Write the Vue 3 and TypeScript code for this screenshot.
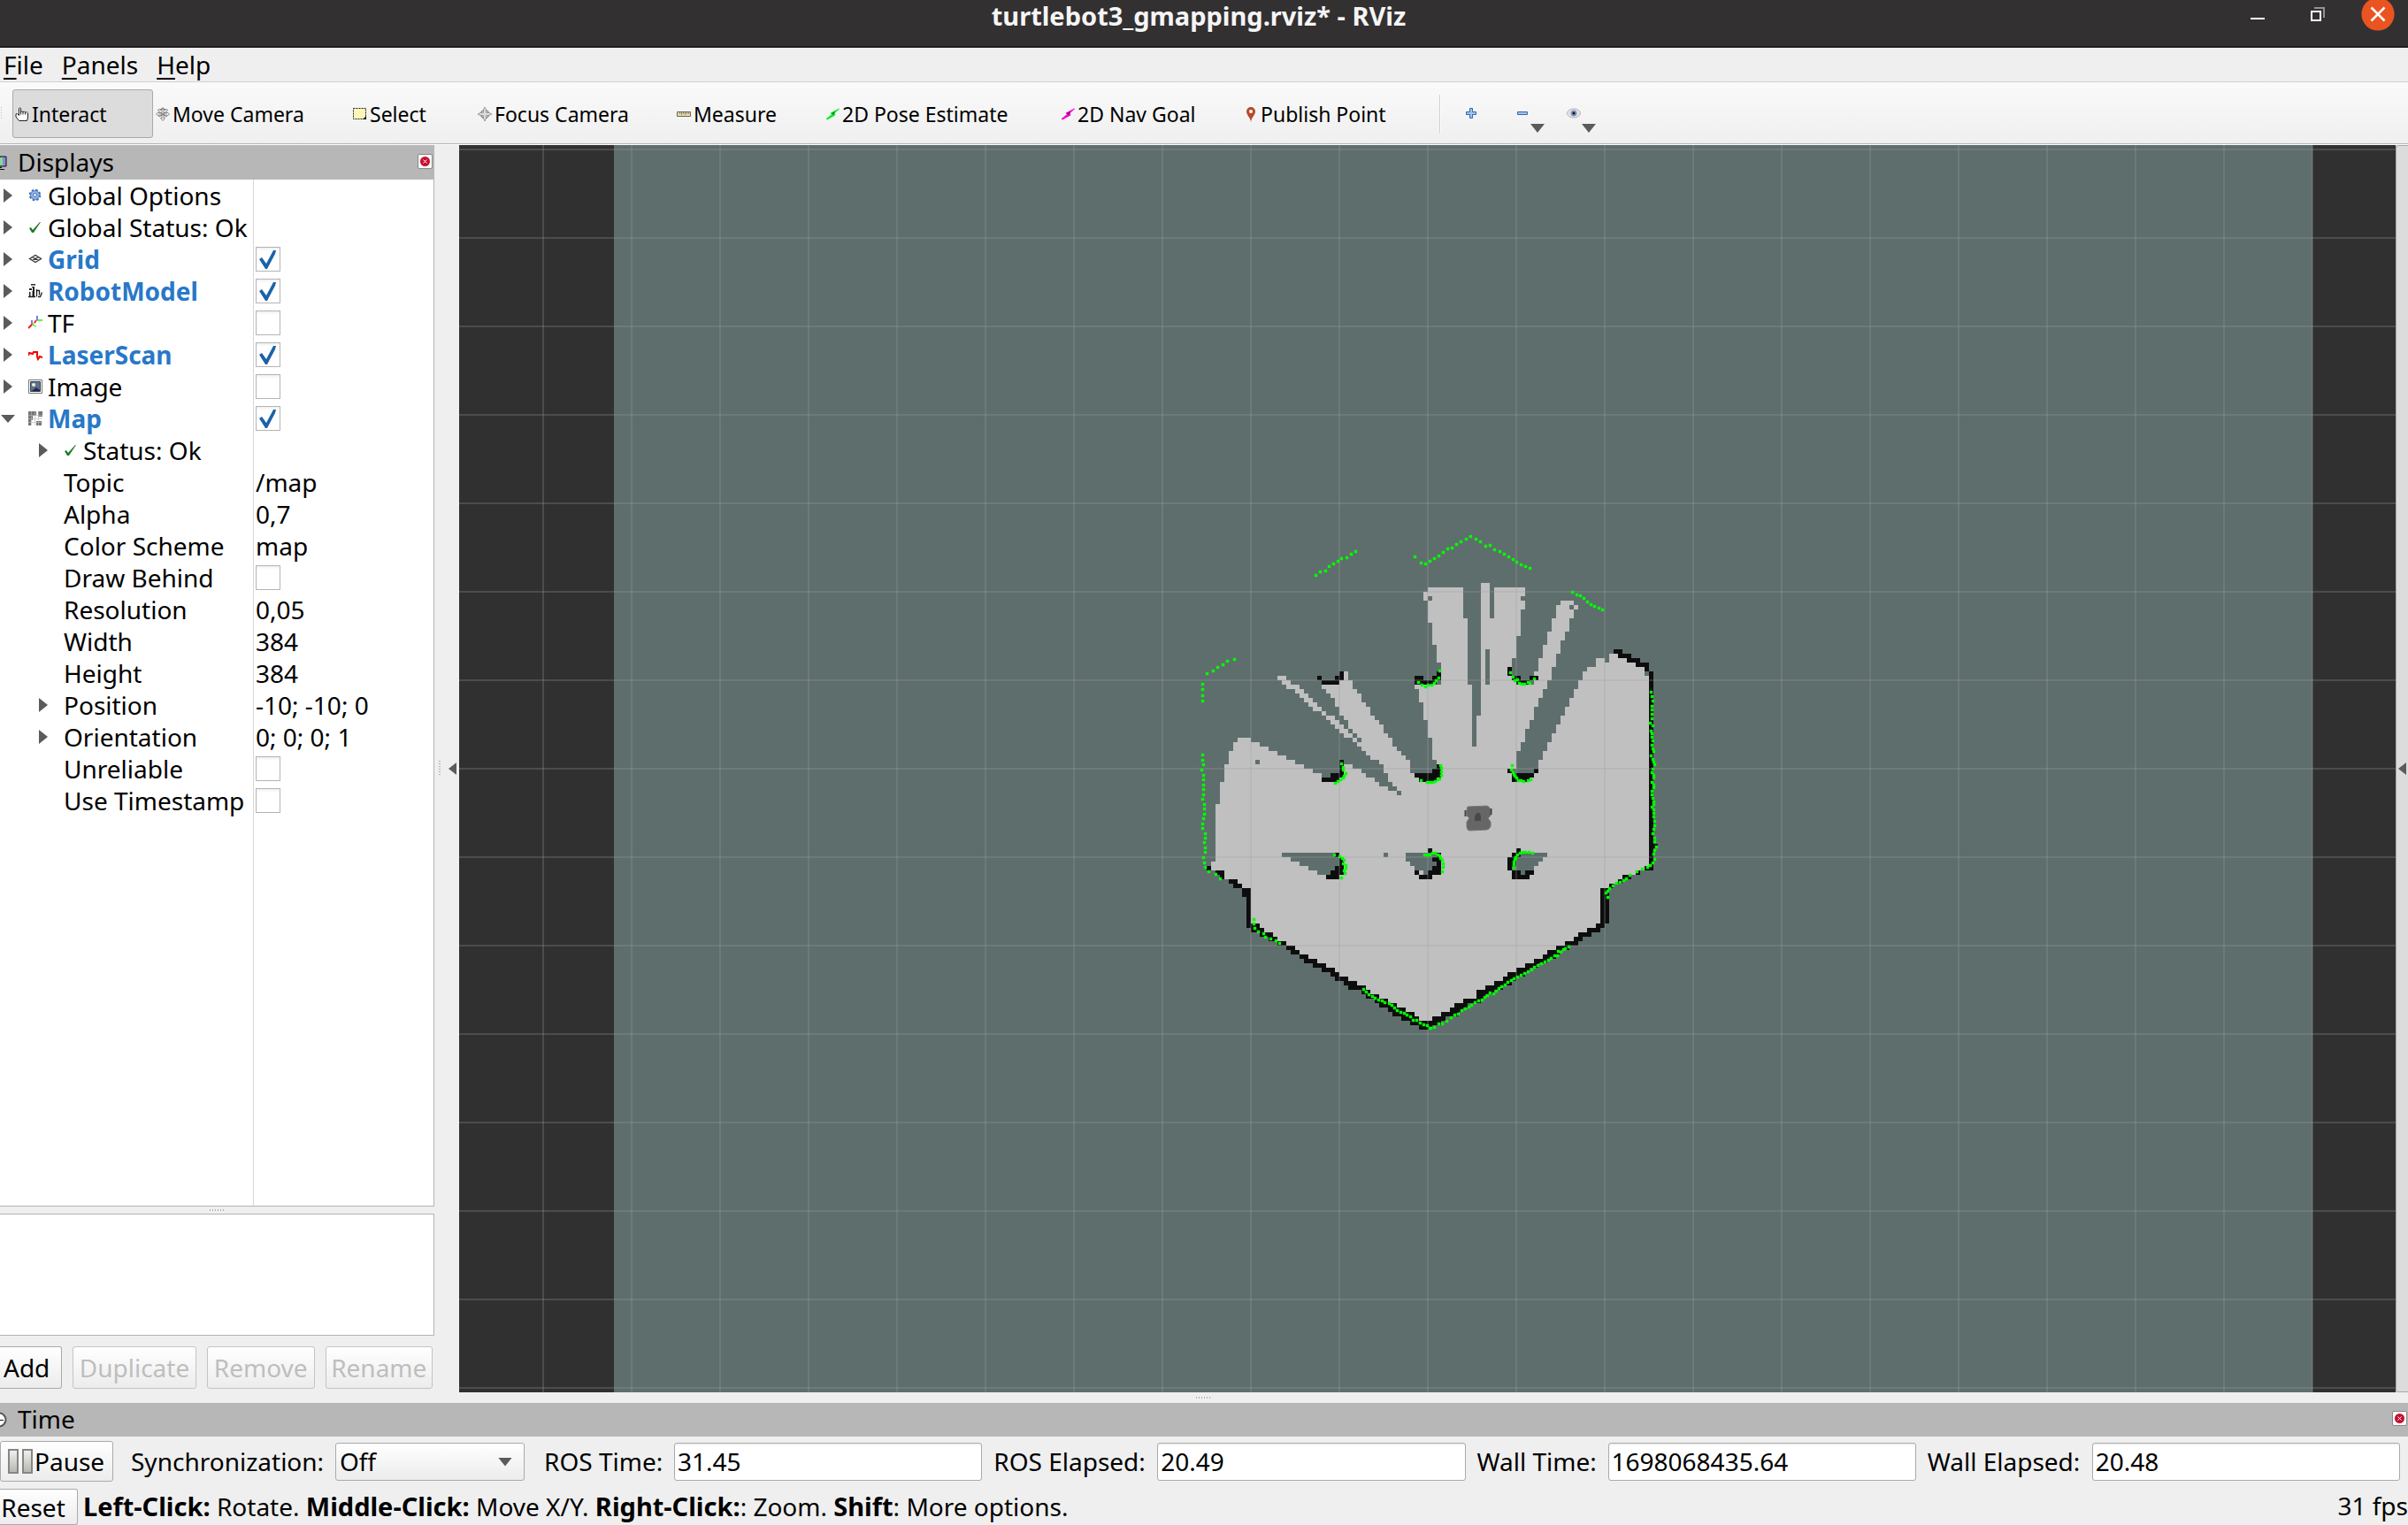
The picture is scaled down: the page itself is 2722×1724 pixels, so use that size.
<script setup lang="ts">
import { computed, ref } from 'vue'

interface Tool { id: string; label: string; width: number }
interface Property {
  id: string
  name: string
  icon?: string
  level: 0 | 1
  arrow?: 'right' | 'down'
  strong?: boolean
  value?: string
  checked?: boolean
}

const menus = ['File', 'Panels', 'Help']

const tools: Tool[] = [
  { id: 'interact', label: 'Interact', width: 159 },
  { id: 'move', label: 'Move Camera', width: 223 },
  { id: 'select', label: 'Select', width: 141 },
  { id: 'focus', label: 'Focus Camera', width: 225 },
  { id: 'measure', label: 'Measure', width: 168 },
  { id: 'pose', label: '2D Pose Estimate', width: 266 },
  { id: 'goal', label: '2D Nav Goal', width: 207 },
  { id: 'publish', label: 'Publish Point', width: 222 },
]
const activeTool = ref('interact')

const properties = ref<Property[]>([
  { id: 'global-options', name: 'Global Options', icon: 'gear', level: 0, arrow: 'right' },
  { id: 'global-status', name: 'Global Status: Ok', icon: 'ok', level: 0, arrow: 'right' },
  { id: 'grid', name: 'Grid', icon: 'grid', level: 0, arrow: 'right', strong: true, checked: true },
  { id: 'robot', name: 'RobotModel', icon: 'robot', level: 0, arrow: 'right', strong: true, checked: true },
  { id: 'tf', name: 'TF', icon: 'tf', level: 0, arrow: 'right', checked: false },
  { id: 'laser', name: 'LaserScan', icon: 'laser', level: 0, arrow: 'right', strong: true, checked: true },
  { id: 'image', name: 'Image', icon: 'image', level: 0, arrow: 'right', checked: false },
  { id: 'map', name: 'Map', icon: 'map', level: 0, arrow: 'down', strong: true, checked: true },
  { id: 'map-status', name: 'Status: Ok', icon: 'ok', level: 1, arrow: 'right' },
  { id: 'topic', name: 'Topic', level: 1, value: '/map' },
  { id: 'alpha', name: 'Alpha', level: 1, value: '0,7' },
  { id: 'scheme', name: 'Color Scheme', level: 1, value: 'map' },
  { id: 'behind', name: 'Draw Behind', level: 1, checked: false },
  { id: 'resolution', name: 'Resolution', level: 1, value: '0,05' },
  { id: 'width', name: 'Width', level: 1, value: '384' },
  { id: 'height', name: 'Height', level: 1, value: '384' },
  { id: 'position', name: 'Position', level: 1, arrow: 'right', value: '-10; -10; 0' },
  { id: 'orientation', name: 'Orientation', level: 1, arrow: 'right', value: '0; 0; 0; 1' },
  { id: 'unreliable', name: 'Unreliable', level: 1, checked: false },
  { id: 'timestamp', name: 'Use Timestamp', level: 1, checked: false },
])

const clocks = [
  { id: 'ros-time', label: 'ROS Time:', value: '31.45', labelWidth: 133 },
  { id: 'ros-elapsed', label: 'ROS Elapsed:', value: '20.49', labelWidth: 171 },
  { id: 'wall-time', label: 'Wall Time:', value: '1698068435.64', labelWidth: 134 },
  { id: 'wall-elapsed', label: 'Wall Elapsed:', value: '20.48', labelWidth: 172 },
]

const hints = [
  ['Left-Click:', ' Rotate. '],
  ['Middle-Click:', ' Move X/Y. '],
  ['Right-Click:', ': Zoom. '],
  ['Shift', ': More options.'],
]

// Occupancy grid, one entry per row or row range: "row:from-to,from-to".
const freeRuns = `15:66-68 16:54-62,66-68,69-76 17:53-62,66-68,69-76 18:53-54,55-62,66-68,69-75
19:54-62,66-68,69-76,84-87 20:54-62,66-68,69-76,83-86,87-88 21-22:54-62,66-68,69-75,83-87
23:54-63,66-75,82-86 24-25:55-63,66-75,82-86 26:55-63,66-75,81-85 27:55-63,66-74,81-85
28:55-63,66-74,81-84 29:56-63,66-74,80-84 30:56-63,66-67,68-74,80-84 31:56-63,66-67,68-74,80-83,95-98
32:56-63,66-67,68-73,79-83,92-94,95-99 33:57-63,66-67,68-73,79-83,92-101 34:57-63,66-67,68-73,79-82,90-103
35:57-63,66-67,68-73,78-82,35-36,89-103 36:20-22,35-36,57-63,66-67,68-74,79-82,89-104
37:21-23,34-37,57-63,66-67,68-74,78-81,88-104 38:22-25,30-37,51-64,66-81,88-104
39:24-26,31-38,52-64,66-80,87-104 40:25-27,32-39,52-64,66-80,87-104 41:26-28,33-39,52-64,66-79,86-104
42:27-29,33-40,53-64,66-79,86-104 43:28-30,34-41,53-64,66-78,85-104 44:30-31,34-41,53-64,66-78,85-104
45:31-33,35-42,53-64,65-78,84-104 46:32-34,36-43,54-64,65-77,84-104 47:33-35,36-44,54-64,65-77,83-104
48:34-36,37-44,54-64,65-76,83-104 49:35-37,38-45,54-64,65-76,82-104 50:11-14,37-38,39-46,55-64,65-76,82-104
51:10-14,38-46,55-64,65-75,81-104 51:14-16 52:10-18,39-47,55-75,81-104 53:9-20,40-48,55-74,80-104
54:9-22,41-49,55-74,80-104 55:9-24,43-50,56-74,79-104 56:8-26,35-37,44-50,57-74,79-104
57:8-28,35-39,44-50,57-72,79-104 58:8-30,35-40,45-51,57-104 59:8-42,45-104 60:7-43,46-104 61:7-45,47-104
62:7-47,48-104 63-64:7-104 65-77:6-104 78:5-104 79:5-103 80:7-101 81:8-99 82:9-97 83:11-96 84-91:14-94
92:14-93 93:16-91 94:18-89 95:20-88 96:21-86 97:23-84 98:25-82 99:26-81 100:28-79 101:30-77 102:32-75
103:34-73 104:35-72 105:37-70 106:39-68 107:41-66 108:42-65 109:44-63 110:46-61 111:48-60 112:50-58 113:52-56`

const unknownRuns = `55:15-16 58:30-32,74-78 57:73-79 76:21-33,44-45,49-56,75-81 77:23-34,49-55,74-80 78:25-34,50-56,74-79
79:27-33,51-55,73-78 80:29-32,53-54,75-76`

const wallRuns = `35:34-35,56-57,104-105 36:29-30,33-35,51-53,55-57,73-75,77-79 37:30-34,51-56,74-77 34:72-73,103-104
33:101-104 32:99-102 31:97-100 30:96-98 35:72-73 36-79:104-105 55-57:34-35 58:32-35 59:30-34
56:56-57 57:55-57,72-73,78-79 58:51-57,73-78 59:52-56,73-77 74:105-106
75:54-55,74-75 76:33-34,56-57,73-75 77:34-35,55-57,72-74 78:34-35,56-57,72-74 79:33-35,55-57,72-73
80:32-35,51-52,54-57,73-75,76-78 81:31-34,52-55,73-77
79:4-5,103-105 80:6-8,101-102 81:7-8,98-100 82:9-11,97-98 83:10-12,95-96 84-85:12-14,93-95 86-91:13-14,93-95
92:13-16,92-94 93:14-17,90-93 94:16-19,88-91 95:18-20,87-89 96:20-22,85-88 97:22-24,83-86 98:23-25,81-84
99:25-27,80-83 100:26-29,78-81 101:28-31,76-79 102:30-33,74-77 103:32-34,72-76 104:33-36,71-74
105:35-38,69-73 106:36-40,67-71 107:39-41,65-69 108:40-43,65-67 109:42-45,62-66 110:43-47,60-63
111:45-49,59-62 112:46-51,57-61 113:48-52,55-58 114:50-57 115:52-55`

function runsToPath(runs: string): string {
  return runs.split(/\s+/).map((entry) => {
    const [rows, spans] = entry.split(':')
    const [top, bottom = top] = rows.split('-').map(Number)
    return spans.split(',').map((span) => {
      const [from, to] = span.split('-').map(Number)
      return `M${from} ${top}H${to}V${bottom + 1}H${from}Z`
    }).join('')
  }).join('')
}

const freePath = computed(() => runsToPath(freeRuns))
const unknownPath = computed(() => runsToPath(unknownRuns))
const wallPath = computed(() => runsToPath(wallRuns))

// Laser returns in view pixels.
const scan = `1487,650 1492,646 1498,645 1502,640 1507,637 1512,634 1516,631 1522,630 1527,626 1532,623
1364,761 1371,758 1376,754 1382,751 1387,747 1395,745 1359,773 1359,779 1359,786 1359,792
1359,853 1359,859 1360,864 1358,870 1360,876 1360,881 1360,887 1360,892 1360,898 1359,903 1361,909 1361,914 1361,920
1360,925 1359,931 1359,936 1362,942 1362,947 1361,952 1362,958 1362,963 1360,969 1361,975 1362,980 1366,985 1374,988 1379,993
1417,1039 1417,1044 1418,1049 1422,1053 1428,1055 1430,1059 1436,1061 1442,1063 1446,1066
1541,1118 1544,1121 1547,1124 1551,1126 1554,1128 1558,1130 1562,1131 1565,1133 1570,1134 1573,1136 1576,1139 1579,1142
1583,1144 1587,1145 1590,1147 1594,1149 1597,1153 1601,1153 1605,1156 1609,1158 1613,1159 1616,1162
1516,863 1518,867 1518,870 1521,874 1519,877 1518,879 1515,881 1512,883 1509,885
1508,966 1514,968 1517,970 1519,972 1518,976 1521,978 1521,981 1519,984 1520,987 1516,992
1599,629 1606,636 1611,637 1616,634 1621,631 1626,628 1631,624 1636,620 1641,619 1646,615 1651,612 1657,609 1662,606
1668,609 1673,612 1679,617 1684,616 1689,621 1695,623 1700,626 1705,629 1710,632 1714,635 1719,638 1724,640 1729,642
1777,669 1782,672 1786,673 1790,676 1794,680 1798,683 1802,685 1807,687 1811,689
1603,771 1607,774 1611,776 1614,774 1618,774 1621,772 1623,769 1626,766 1627,758
1707,760 1710,765 1712,769 1715,768 1717,772 1720,773 1723,773 1727,771 1729,772 1734,767
1628,865 1629,868 1629,872 1629,876 1627,880 1625,881 1622,883 1619,884 1616,884 1613,884 1606,882
1709,865 1708,870 1710,873 1711,875 1712,877 1714,879 1716,882 1719,882 1722,883 1727,882 1730,881
1866,782 1867,787 1868,792 1867,798 1867,802 1867,807 1867,812 1865,817 1868,820 1866,826 1867,829 1867,833 1868,837
1867,842 1868,846 1869,849 1866,854 1868,858 1869,861 1870,864 1868,869 1867,873 1869,876 1869,879 1867,884 1869,887
1869,890 1867,894 1867,898 1868,902 1869,906 1869,909 1867,912 1869,915 1869,919 1869,923 1870,928 1870,933 1869,937
1868,942 1870,947 1870,951 1872,957 1870,961 1869,965 1870,971 1868,975 1865,978 1862,980 1856,982 1850,985 1842,989
1838,993 1835,995 1831,997 1827,998 1823,1001 1819,1004 1817,1007 1815,1009 1817,1014
1773,1070 1769,1072 1767,1073 1764,1076 1761,1075 1760,1080 1757,1080 1753,1083 1750,1085 1746,1087 1742,1089 1738,1091
1734,1093 1731,1096 1727,1098 1723,1100 1719,1102 1715,1104 1711,1106 1708,1108 1704,1110 1701,1113 1697,1115 1694,1117
1691,1120 1688,1123 1684,1122 1681,1125 1678,1127 1675,1130 1671,1131 1667,1133 1663,1136 1660,1138 1656,1140 1652,1142
1648,1146 1644,1147 1640,1150 1635,1154 1630,1157 1626,1157 1621,1161 1617,1162
1610,966 1613,966 1616,966 1619,964 1622,964 1625,966 1627,967 1628,970 1630,972 1631,976 1631,980 1630,985
1711,981 1711,977 1711,974 1712,971 1713,969 1715,966 1718,964 1721,963 1724,963 1728,963 1732,964`

const scanPath = scan.split(/\s+/).map((point) => {
  const [x, y] = point.split(',').map(Number)
  return `M${x - 1} ${y - 1}h3v3h-3z`
}).join('')

const gridColumns = Array.from({ length: 21 }, (_, i) => `M${614 + i * 100} 164V1574`).join('')
const gridRows = Array.from({ length: 15 }, (_, i) => `M519 ${169 + i * 100}H2708`).join('')
</script>

<template>
  <div class="window">
    <header class="titlebar">
      <h1>turtlebot3_gmapping.rviz* - RViz</h1>
      <div class="window-buttons">
        <button type="button" aria-label="Minimize">
          <svg width="16" height="16"><path d="M0 12h16v2H0z" fill="#fff" /></svg>
        </button>
        <button type="button" aria-label="Restore">
          <svg width="16" height="16"><path d="M4 0h12v12h-2V2H4z" fill="#949393" /><path d="M1 5h10v10H1z" fill="none" stroke="#fff" stroke-width="2" /></svg>
        </button>
        <button type="button" aria-label="Close">
          <svg width="38" height="38"><circle cx="19" cy="19" r="18.6" fill="#e95420" /><path d="M11.500 11.500l15 15m0-15l-15 15" stroke="#fff" stroke-width="2.500" /></svg>
        </button>
      </div>
    </header>

    <nav class="menubar">
      <button v-for="menu in menus" :key="menu" type="button"><span class="mnemonic">{{ menu[0] }}</span>{{ menu.slice(1) }}</button>
    </nav>

    <div class="toolbar">
      <span class="handle"></span>
      <button
        v-for="tool in tools" :key="tool.id" type="button" class="tool"
        :class="{ active: tool.id === activeTool }" :style="{ width: tool.width + 'px' }" @click="activeTool = tool.id"
      >
        <svg v-if="tool.id === 'interact'" width="16" height="16">
          <path d="M4.500 9.500V1.500q1-1.500 2 0v4q1-1 2.500 0 1.300-1 2.500.5 2-1 3 .8V12l-1 3.500H4.500L1 11V8l1.500-.5z" fill="#fff" stroke="#222" />
          <path d="M6.500 5v3.500M9 5.500v3M11.500 6v2.500" stroke="#222" fill="none" />
        </svg>
        <svg v-else-if="tool.id === 'move'" width="16" height="16">
          <path d="M8 .5l2.500 3H9V7h3.500V5.500l3 2.500-3 2.500V9H9v3.500h1.500L8 15.500l-2.500-3H7V9H3.500v1.500L.5 8l3-2.500V7H7V3.500H5.500z" fill="#eee" stroke="#777" stroke-width=".8" />
          <path d="M2 3.500q6-3 12 0M3.500 5l8.500 6M12.500 5L4 11" fill="none" stroke="#555" stroke-width=".8" />
        </svg>
        <svg v-else-if="tool.id === 'select'" width="16" height="16">
          <path d="M.5 1.500h14v12H.5z" fill="#fdf6b8" stroke="#222" stroke-dasharray="2 1" /><path d="M15 10v4h-4z" fill="#111" />
        </svg>
        <svg v-else-if="tool.id === 'focus'" width="16" height="16">
          <circle cx="8" cy="8" r="4.500" fill="none" stroke="#888" stroke-width="1.500" />
          <path d="M8 0l1.500 3v3.500H13L16 8l-3 1.500H9.500V13L8 16l-1.500-3V9.500H3L0 8l3-1.500h3.500V3z" fill="#ddd" stroke="#888" stroke-width=".8" />
        </svg>
        <svg v-else-if="tool.id === 'measure'" width="16" height="16">
          <path d="M.5 5.500h15v5H.5z" fill="#e8dca8" stroke="#66645a" /><path d="M3.500 6v2m2-2v3m2-3v2m2-2v3m2-3v2m2-2v2" stroke="#8a8468" />
        </svg>
        <svg v-else-if="tool.id === 'pose' || tool.id === 'goal'" width="16" height="16">
          <path d="M15.500 2L6 7l2 1-7 5.500 1 .5L11 9l-1-2z" :fill="tool.id === 'pose' ? '#0bee2c' : '#f400d0'" :stroke="tool.id === 'pose' ? '#0bee2c' : '#f400d0'" />
          <path d="M7 7l4-2-2 4z" fill="#222" opacity=".6" />
        </svg>
        <svg v-else width="16" height="18">
          <path d="M8 18C7.500 13 3 10 3 6a5 5 0 0 1 10 0c0 4-4.500 7-5 12z" fill="#b8482c" /><circle cx="8" cy="6" r="2" fill="#fff" />
        </svg>
        <span>{{ tool.label }}</span>
      </button>
      <span class="separator"></span>
      <button type="button" class="mini" aria-label="Add tool">
        <svg width="14" height="14"><path d="M5.500 1.500h3v4h4v3h-4v4h-3v-4h-4v-3h4z" fill="#9fc3ee" stroke="#3566ad" /></svg>
      </button>
      <button type="button" class="mini" aria-label="Remove tool">
        <svg width="14" height="14"><path d="M1.500 5.500h11v3h-11z" fill="#9fc3ee" stroke="#3566ad" /></svg>
        <i class="drop"></i>
      </button>
      <button type="button" class="mini" aria-label="Views">
        <svg width="16" height="12"><ellipse cx="8" cy="6" rx="7.500" ry="5" fill="#e4e4e4" stroke="#b5b5b5" /><circle cx="8" cy="6" r="3.500" fill="#7e93c8" /><circle cx="8" cy="6" r="1.500" fill="#111" /></svg>
        <i class="drop"></i>
      </button>
    </div>

    <main class="workspace">
      <section class="displays">
        <header class="panel-head">
          <svg width="8" height="20"><path d="M0 3h7v11H0z" fill="#8f86d8" stroke="#111" /><path d="M0 4h3v9H0z" fill="#7be08a" /><path d="M0 17.500h5M0 15.500h2" stroke="#111" /></svg>
          <h2>Displays</h2>
          <button type="button" class="panel-close" aria-label="Close Displays">
            <svg width="11" height="11"><circle cx="5.500" cy="5.500" r="5.500" fill="#c8102e" /><path d="M3.500 3.500l4 4m0-4l-4 4" stroke="#fff" /></svg>
          </button>
        </header>

        <div class="tree">
          <table>
            <colgroup><col class="name-col" /><col /></colgroup>
            <tbody>
              <tr v-for="row in properties" :key="row.id">
                <td>
                  <div class="name" :class="{ nested: row.level === 1, strong: row.strong }">
                    <span class="twist">
                      <svg v-if="row.arrow === 'right'" width="18" height="16"><path d="M4 0l10 8-10 8z" fill="#5b5b5b" /></svg>
                      <svg v-else-if="row.arrow === 'down'" width="18" height="16"><path d="M1 4h16l-8 9z" fill="#5b5b5b" /></svg>
                    </span>
                    <svg v-if="row.icon" class="icon" width="16" height="16" viewBox="0 0 16 16">
                      <g v-if="row.icon === 'gear'"><circle cx="7.500" cy="7.500" r="5.500" fill="#8db4e3" stroke="#3f6eb3" stroke-width="2.500" stroke-dasharray="2.500 1.820" /><circle cx="7.500" cy="7.500" r="4.800" fill="#94b9e6" stroke="#5b87c6" /><circle cx="7.500" cy="7.500" r="2" fill="#e4eefa" stroke="#3f6eb3" /></g>
                      <path v-else-if="row.icon === 'ok'" d="M1 9l2-1 2 3 8-9 1 0-8 12H4z" fill="#1d7a26" />
                      <g v-else-if="row.icon === 'grid'" fill="none" stroke="#333" stroke-width="1.300"><path d="M1.500 7.500L8 3.500l6.500 4L8 11.500zM4.500 5.500l7 4M11.500 5.500l-7 4" /></g>
                      <g v-else-if="row.icon === 'robot'"><path d="M3 1q2.500-2 5 0z" fill="#557" stroke="#223" /><path d="M4 3.500h3" stroke="#223" /><path d="M1 5h3v2H1zM5 4h2v4H5zM1 9h1.500v5H1zM4.500 8H7v6H4.500z" fill="#222" /><path d="M0 14.500h8M9.500 6v8.500M9 7.500h3.500v5M11 14.500h2.500l2-5" stroke="#222" stroke-width="1.300" fill="none" /></g>
                      <g v-else-if="row.icon === 'tf'" fill="none" stroke-width="1.300"><path d="M4 10l-4 4" stroke="#f11" stroke-width="2" /><path d="M4 10V5M10 5V0" stroke="#33e" /><path d="M4 10l5 2M10 5h6" stroke="#2e2" /><path d="M5 10l2-2" stroke="#fa2" stroke-width="1.500" /><path d="M7 8l2-3" stroke="#f22" stroke-width="2" /></g>
                      <path v-else-if="row.icon === 'laser'" d="M0 9l1-3 4 1 1-2h4v5l1 3 2-3 3 1" fill="none" stroke="#f00000" stroke-width="2" />
                      <g v-else-if="row.icon === 'image'"><path d="M.5.5h15v15H.5z" fill="#fff" stroke="#777" /><path d="M2.500 2.500h11v11h-11z" fill="#5c7194" stroke="#333f55" /><circle cx="6" cy="6" r="2" fill="#f3f0cf" /><path d="M4 13l5-4 5 4z" fill="#222c3c" /></g>
                      <g v-else><path d="M0 0h9v5H5v5H3v6H0zM11 0h5v6h-5zM9 11h6v5H9z" fill="#777" /><path d="M3.500 0v16M7.500 0v16M11.500 0v16M0 4.500h16M0 8.500h16M0 12.500h16" stroke="#bbb" stroke-width=".6" /></g>
                    </svg>
                    <label v-if="row.checked !== undefined" :for="row.id">{{ row.name }}</label>
                    <span v-else>{{ row.name }}</span>
                  </div>
                </td>
                <td class="value">
                  <input v-if="row.checked !== undefined" :id="row.id" v-model="row.checked" type="checkbox" />
                  <template v-else>{{ row.value }}</template>
                </td>
              </tr>
            </tbody>
          </table>
        </div>
        <div class="splitter"><i class="dots"></i></div>
        <div class="help"></div>
        <div class="actions">
          <button type="button" class="push add">Add</button>
          <button type="button" class="push duplicate" disabled>Duplicate</button>
          <button type="button" class="push" disabled>Remove</button>
          <button type="button" class="push" disabled>Rename</button>
        </div>
      </section>

      <div class="collapse-left">
        <i class="dots upright"></i>
        <svg width="9" height="14"><path d="M9 0v14L0 7z" fill="#5b5b5b" /></svg>
      </div>

      <svg class="view" viewBox="519 164 2189 1410" preserveAspectRatio="xMidYMid slice" role="img" aria-label="Map view">
        <path d="M519 164h2189v1410H519z" fill="#303030" />
        <path d="M694 164h1920v1410H694z" fill="#5e6e6c" />
        <g transform="translate(1344 584) scale(5)" shape-rendering="crispEdges">
          <path :d="freePath" fill="#c0c0c0" />
          <path :d="unknownPath" fill="#5e6e6c" />
          <path :d="wallPath" fill="#0d0d0d" />
        </g>
        <g fill="none" stroke="#a0a0a4" stroke-opacity=".25" stroke-width="2">
          <path :d="gridColumns" /><path :d="gridRows" />
        </g>
        <path :d="scanPath" fill="#00ff00" stroke="#00ff00" stroke-opacity=".4" />
        <g>
          <path d="M1659 912l22-1q3 1 4 5v6l-3 3 3 4v5q-1 3-4 4l-20 1q-3-1-3-4v-6l3-4-3-3v-6z" fill="#666" stroke="#777" />
          <path d="M1656.500 916v7M1685.500 914v7" stroke="#444" stroke-width="2" />
          <path d="M1667 928v-4q1-5 4-5t3 5v4z" fill="#484848" />
        </g>
      </svg>

      <button type="button" class="collapse-right" aria-label="Show right panels">
        <svg width="9" height="14"><path d="M9 0v14L0 7z" fill="#5b5b5b" /></svg>
      </button>
    </main>

    <div class="dock-splitter"><i class="dots"></i></div>

    <section class="time">
      <header class="panel-head">
        <svg width="8" height="18"><circle cx="-1" cy="9" r="7.500" fill="#fff" stroke="#555" stroke-width="2" /><path d="M0 9.500h4" stroke="#111" /></svg>
        <h2>Time</h2>
        <button type="button" class="panel-close" aria-label="Close Time">
          <svg width="11" height="11"><circle cx="5.500" cy="5.500" r="5.500" fill="#c8102e" /><path d="M3.500 3.500l4 4m0-4l-4 4" stroke="#fff" /></svg>
        </button>
      </header>
      <div class="time-row">
        <button type="button" class="push pause">
          <svg width="30" height="28">
            <defs><linearGradient id="bar" x1="0" y1="0" x2="0" y2="1"><stop offset="0" stop-color="#f2f2f0" /><stop offset="1" stop-color="#b4b6b0" /></linearGradient></defs>
            <path d="M1 1h10v26H1zM17 1h10v26H17z" fill="url(#bar)" stroke="#858783" stroke-width="2" />
          </svg>
          <span>Pause</span>
        </button>
        <label for="sync" class="sync-label">Synchronization:</label>
        <div class="combo">
          <select id="sync"><option>Off</option><option>Exact</option><option>Approximate</option></select>
          <i class="drop"></i>
        </div>
        <template v-for="clock in clocks" :key="clock.id">
          <label :for="clock.id" :style="{ width: clock.labelWidth + 'px' }">{{ clock.label }}</label>
          <input :id="clock.id" type="text" :value="clock.value" readonly />
        </template>
      </div>
    </section>

    <footer class="status">
      <button type="button" class="push reset">Reset</button>
      <p><template v-for="hint in hints" :key="hint[0]"><b>{{ hint[0] }}</b>{{ hint[1] }}</template></p>
      <span class="fps">31 fps</span>
    </footer>
  </div>
</template>

<style>
body { margin: 0; overflow: hidden; }
</style>

<style scoped>
.window {
  display: flex; flex-direction: column; min-height: 100vh; overflow: hidden;
  background: #efefef; color: #000; font: 28px/36px "Noto Sans", sans-serif; white-space: nowrap;
}
* { box-sizing: border-box; }
svg { display: block; flex: none; }
button, input, select { font: inherit; color: inherit; margin: 0; }
button { border: 0; background: none; padding: 0; }
h1, h2, p { margin: 0; font-size: inherit; font-weight: normal; }

.titlebar {
  display: flex; justify-content: center; height: 54px; position: relative;
  background: #333031; border-bottom: 2px solid #231f20; color: #f5f5f5;
}
.titlebar h1 { font-size: 29px; font-weight: bold; padding-right: 12px; }
.window-buttons { position: absolute; right: 15px; top: -3px; height: 38px; display: flex; align-items: center; gap: 52px; }
.window-buttons button:last-child { margin-left: -11px; }

.menubar { display: flex; height: 39px; align-items: center; gap: 21px; padding-left: 4px; border-bottom: 1px solid #d0d0d0; }
.menubar button { line-height: 38px; }
.mnemonic { text-decoration: underline; text-decoration-thickness: 2px; text-underline-offset: 4px; text-decoration-skip-ink: none; }

.toolbar {
  display: flex; height: 71px; align-items: flex-start; padding-top: 8px; font-size: 23px;
  background: linear-gradient(#fafafa, #efefef); border-bottom: 1px solid #fff; box-shadow: inset 0 -1px #b4b4b4;
}
.handle { width: 4px; height: 16px; margin: 19px 10px 0 0; background: radial-gradient(#bbb 30%, transparent 40%) 0 0 / 3px 3px; }
.tool { display: flex; align-items: center; height: 55px; padding: 0 2px; gap: 3px; border: 1px solid transparent; border-radius: 3px; text-align: left; }
.tool.active { background: #dcdcdc; border-color: #aaa; }
.separator { width: 2px; height: 43px; margin: 6px 5px 0 2px; background: #d0d0d0; border-right: 1px solid #fff; }
.mini { position: relative; width: 58px; height: 54px; display: flex; align-items: center; justify-content: center; }
.drop { display: block; width: 16px; height: 10px; background: #5b5b5b; clip-path: polygon(0 0, 100% 0, 50% 100%); }
.mini .drop { position: absolute; right: 4px; bottom: 5px; }

.workspace { display: flex; flex: 1; min-height: 0; }
.displays { display: flex; flex-direction: column; width: 491px; flex: none; }
.panel-head { display: flex; align-items: center; height: 39px; background: #b7b7b7; }
.panel-head h2 { flex: 1; padding: 0 0 2px 12px; }
.panel-close { display: grid; place-items: center; width: 17px; height: 17px; margin: 0 2px 3px 0; background: #fafafa; border: 1px solid #888; border-radius: 2px; }

.tree {
  flex: 1; border-right: 1px solid #b4b4b4; border-bottom: 1px solid #b4b4b4;
  background: linear-gradient(#d8d8d8, #d8d8d8) 286px 0 / 1px 100% no-repeat #fff;
}
table { width: 100%; border-collapse: collapse; table-layout: fixed; }
.name-col { width: 287px; }
td { padding: 0; height: 36px; }
.name { display: flex; align-items: center; height: 36px; }
.name.nested { padding-left: 40px; }
.name.strong { font-weight: bold; color: #2878c8; }
.twist { width: 32px; flex: none; }
.icon { margin-right: 6px; }
.value { padding-left: 2px; }
input[type="checkbox"] {
  appearance: none; display: block; width: 28px; height: 28px; border: 1px solid #b4b4b4;
  background: linear-gradient(#f0f0f0, #fff 4px);
}
input[type="checkbox"]:checked {
  background: url("data:image/svg+xml,%3Csvg xmlns='http://www.w3.org/2000/svg' viewBox='0 0 26 26'%3E%3Cpath d='M3 13l3-2 5 7L19 3h3l-1 4-9 17h-2z' fill='%231c62a8'/%3E%3C/svg%3E"), linear-gradient(#f0f0f0, #fff 4px);
}
.splitter { height: 8px; display: flex; align-items: center; justify-content: center; }
.dots { width: 18px; height: 2px; background: repeating-linear-gradient(90deg, #b0b0b0 0 1px, transparent 1px 3px); }
.dots.upright { width: 2px; height: 18px; background: repeating-linear-gradient(#b0b0b0 0 1px, transparent 1px 3px); }
.help { height: 138px; background: #fff; border: 1px solid #b4b4b4; border-left: 0; }
.actions { display: flex; gap: 12px; height: 64px; padding: 12px 2px 4px 0; }
.push { border: 1px solid #aaa; border-radius: 3px; background: linear-gradient(#fff, #ececec); text-align: center; }
.push:disabled { color: #bebebe; border-color: #c4c4c4; flex: 1; min-width: 0; }
.push.duplicate { flex: none; width: 140px; }
.add { width: 70px; padding: 0 14px 0 4px; border-left: 0; border-radius: 0 3px 3px 0; flex: none; }
.collapse-left { display: flex; align-items: center; width: 28px; flex: none; padding-left: 5px; gap: 9px; }
.view { flex: 1; min-width: 0; height: auto; }
.collapse-right { width: 14px; flex: none; display: flex; align-items: center; justify-content: center; background: #dcdcdc; border: 1px solid #aaa; border-right: 0; border-radius: 3px 0 0 3px; }

.dock-splitter { height: 12px; display: flex; align-items: center; justify-content: center; }
.time .panel-head { height: 38px; }
.time .panel-close { margin-right: 1px; }
.time-row { display: flex; align-items: center; height: 59px; padding: 0 9px 3px 0; }
.time-row label { flex: none; margin: 0 14px 0 13px; }
.time-row .sync-label { width: 218px; margin: 0 13px 0 20px; }
.pause { display: flex; align-items: center; width: 128px; height: 46px; padding: 0 0 0 8px; flex: none; }
.combo { position: relative; width: 214px; flex: none; margin-right: 9px; }
.combo select { appearance: none; display: block; width: 100%; height: 43px; padding: 0 4px; border: 1px solid #aaa; border-radius: 3px; background: linear-gradient(#fff, #ececec); }
.combo .drop { position: absolute; right: 14px; top: 17px; }
.time-row input { flex: 1 1 0; min-width: 0; width: 0; height: 43px; padding: 0 3px; border: 1px solid #aaa; border-radius: 3px; background: linear-gradient(#eee, #fff 3px); }

.status { display: flex; align-items: center; height: 41px; }
.status p { flex: 1; padding: 0 0 2px 6px; white-space: pre; }
.status b { font-size: 29px; }
.reset { width: 88px; height: 41px; padding: 0 12px 0 0; border-left: 0; border-radius: 0 3px 3px 0; }
.fps { padding-bottom: 3px; }
</style>
